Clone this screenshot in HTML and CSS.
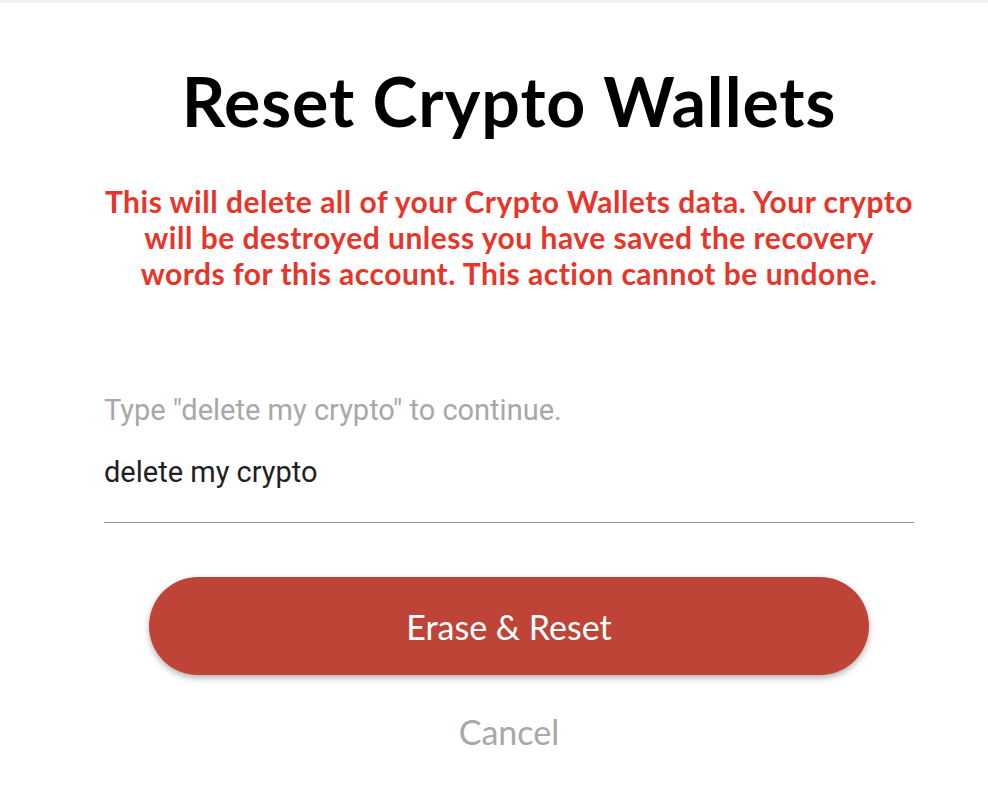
FILE: index.html
```html
<!DOCTYPE html>
<html>
<head>
<meta charset="utf-8">
<link rel="stylesheet" href="styles.css">
</head>
<body>
<div class="topbar"></div>
<main class="dialog">
  <h1 class="title">Reset Crypto Wallets</h1>
  <p class="warning">This will delete all of your Crypto Wallets data. Your crypto will be destroyed unless you have saved the recovery words for this account. This action cannot be undone.</p>
  <div class="field">
    <label class="label">Type "delete my crypto" to continue.</label>
    <div class="input">delete my crypto</div>
  </div>
  <button class="primary">Erase &amp; Reset</button>
  <button class="cancel">Cancel</button>
</main>
</body>
</html>
```
FILE: styles.css
```css
html, body { margin: 0; padding: 0; background: #fff; }
body { font-family: "Lato", "Noto Sans", sans-serif; }
.topbar { height: 3px; background: #f1f2f4; }
.dialog {
  width: 810px;
  margin-left: 104px;
  display: flex;
  flex-direction: column;
  align-items: center;
}
.title {
  margin: 58px 0 0;
  font-size: 68px;
  line-height: 80px;
  letter-spacing: 0.9px;
  font-weight: 700;
  color: #000;
}
.warning {
  margin: 42px 0 0;
  text-align: center;
  color: #e8352a;
  font-size: 30px;
  line-height: 36px;
  letter-spacing: 0.5px;
  font-weight: 700;
}
.field {
  align-self: stretch;
  margin-top: 102px;
  font-family: "Roboto", sans-serif;
}
.label { display: block; font-size: 29px; line-height: 34px; color: #a8a8a8; }
.input {
  font-size: 29px;
  line-height: 34px;
  color: #1f1f1f;
  padding: 28px 0 33px;
  border-bottom: 1.5px solid #9a9a9a;
}
.primary {
  margin-top: 54px;
  width: 720px;
  height: 98px;
  border: none;
  border-radius: 49px;
  background: #bf4438;
  color: #fff;
  font-family: inherit;
  font-size: 34px;
  box-shadow: 0 3px 6px rgba(0,0,0,0.3);
}
.cancel {
  margin-top: 37px;
  padding: 0;
  border: none;
  background: none;
  font-family: inherit;
  font-size: 34px;
  line-height: 40px;
  color: #a8a8a8;
}
```
